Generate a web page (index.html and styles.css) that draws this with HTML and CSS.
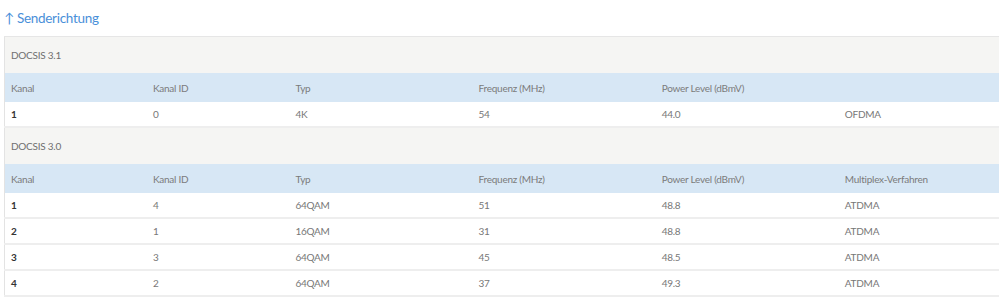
FILE: index.html
```html
<!DOCTYPE html>
<html lang="de">
<head>
<meta charset="utf-8">
<link rel="stylesheet" href="styles.css">
</head>
<body>
<div class="page">
  <h2 class="title">↑ Senderichtung</h2>
  <div class="wrap">
    <table class="grid">
      <colgroup>
        <col class="c14"><col class="c14"><col class="c18"><col class="c18"><col class="c18"><col class="c18">
      </colgroup>
      <tbody>
        <tr class="section"><td colspan="6">DOCSIS 3.1</td></tr>
        <tr class="head"><td>Kanal</td><td>Kanal ID</td><td>Typ</td><td>Frequenz (MHz)</td><td>Power Level (dBmV)</td><td></td></tr>
        <tr class="row"><td class="k">1</td><td>0</td><td>4K</td><td>54</td><td>44.0</td><td>OFDMA</td></tr>
        <tr class="section"><td colspan="6">DOCSIS 3.0</td></tr>
        <tr class="head"><td>Kanal</td><td>Kanal ID</td><td>Typ</td><td>Frequenz (MHz)</td><td>Power Level (dBmV)</td><td>Multiplex-Verfahren</td></tr>
        <tr class="row"><td class="k">1</td><td>4</td><td>64QAM</td><td>51</td><td>48.8</td><td>ATDMA</td></tr>
        <tr class="row"><td class="k">2</td><td>1</td><td>16QAM</td><td>31</td><td>48.8</td><td>ATDMA</td></tr>
        <tr class="row"><td class="k">3</td><td>3</td><td>64QAM</td><td>45</td><td>48.5</td><td>ATDMA</td></tr>
        <tr class="row"><td class="k">4</td><td>2</td><td>64QAM</td><td>37</td><td>49.3</td><td>ATDMA</td></tr>
      </tbody>
    </table>
  </div>
</div>
</body>
</html>
```
FILE: styles.css
```css
html, body {
  margin: 0;
  padding: 0;
  background: #ffffff;
}
body {
  font-family: Lato, "Open Sans", sans-serif;
  overflow: hidden;
}
.page {
  padding: 0 0 0 4px;
}
.title {
  margin: 0;
  padding-top: 9px;
  height: 36px;
  box-sizing: border-box;
  font-size: 13.5px;
  letter-spacing: -0.3px;
  font-weight: normal;
  color: #4a90d9;
  line-height: 18px;
}
.wrap {
  overflow: hidden;
}
.grid {
  width: 1018px;
  border-collapse: collapse;
  table-layout: fixed;
  font-size: 10px;
  letter-spacing: -0.25px;
  color: #777777;
  border-top: 1px solid #e3e3e3;
  border-left: 1px solid #e3e3e3;
}
.c14 { width: 14%; }
.c18 { width: 18%; }
.grid td {
  padding: 0 0 0 6px;
  white-space: nowrap;
  vertical-align: middle;
}
.section td {
  background: #f5f5f3;
  height: 36px;
  color: #6f6f6f;
  border-top: 1px solid #e6e6e6;
}
.head td {
  background: #d7e7f5;
  height: 29px;
  color: #7b7b7b;
}
.row td {
  height: 24px;
  border-bottom: 2px solid #eeeeee;
  background: #ffffff;
}
.row td.k {
  color: #333333;
  font-weight: bold;
}
```
